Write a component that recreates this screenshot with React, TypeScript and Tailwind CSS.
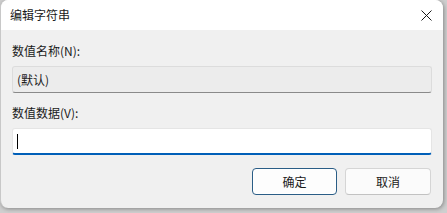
export default function App() {
  return (
    <div
      className="w-[447px] h-[213px] bg-[#cfcfcf] overflow-hidden"
      style={{ fontFamily: '"Noto Sans CJK SC", "Noto Sans", sans-serif' }}
    >
      <div className="w-[443px] h-[208px] bg-[#f0f0f0] rounded-lg overflow-hidden border-l border-[#c8c8c8] shadow-[1px_1px_4px_rgba(0,0,0,0.35)] flex flex-col text-[12px] text-[#1a1a1a]">
        <div className="h-[30px] bg-white flex items-center justify-between pl-[9px] pr-[10px] shrink-0">
          <span className="leading-none">编辑字符串</span>
          <svg width="11" height="11" viewBox="0 0 11 11" className="mr-[1px]">
            <path d="M0.5 0.5 L10.5 10.5 M10.5 0.5 L0.5 10.5" stroke="#1a1a1a" strokeWidth="1" />
          </svg>
        </div>
        <div className="flex flex-col px-[11px] pt-[13px]">
          <div className="h-[16px] leading-[16px]">数值名称(N):</div>
          <div className="mt-[7px] h-[27px] bg-[#ececec] border border-[#dcdcdc] border-b-[#8a8a8a] rounded-[3px] flex items-center pl-[4px] leading-none">
            (默认)
          </div>
          <div className="mt-[12px] h-[16px] leading-[16px]">数值数据(V):</div>
          <div className="mt-[7px] h-[27px] bg-white border border-[#e5e5e5] border-b-2 border-b-[#005fb8] rounded-[3px] flex items-center pl-[4px]">
            <div className="w-[1px] h-[15px] bg-black" />
          </div>
          <div className="mt-[13px] flex justify-end gap-[8px] pr-[1px]">
            <button className="w-[85px] h-[27px] bg-[#fdfdfd] rounded-[4px] border border-[#2a5d86] shadow-[inset_0_0_0_1px_#ffffff] leading-none">
              确定
            </button>
            <button className="w-[86px] h-[27px] bg-[#fbfbfb] rounded-[4px] border border-[#d5d5d5] border-b-[#c2c2c2] leading-none">
              取消
            </button>
          </div>
        </div>
      </div>
    </div>
  );
}
